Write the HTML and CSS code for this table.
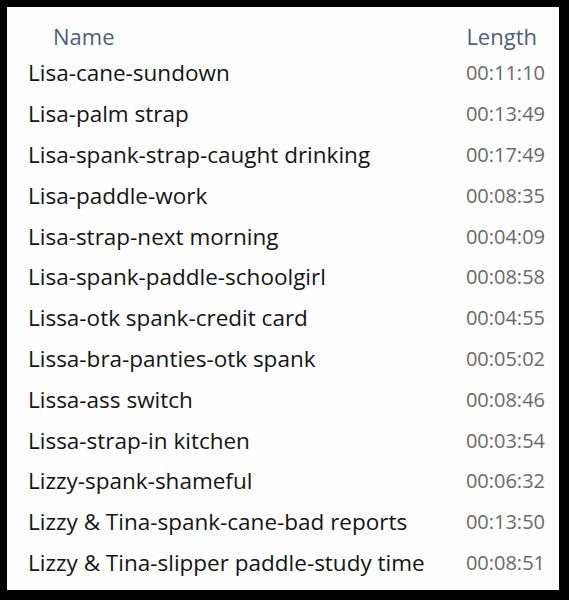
FILE: index.html
```html
<!DOCTYPE html>
<html lang="en">
<head>
    <meta charset="UTF-8">
    <title>Video list</title>
    <link rel="stylesheet" href="styles.css">
</head>
<body>
    <div class="panel">
        <div class="header">
            <span class="col-name">Name</span>
            <span class="col-length">Length</span>
        </div>
        <ul class="list">
            <li><span class="name">Lisa-cane-sundown</span><span class="time">00:11:10</span></li>
            <li><span class="name">Lisa-palm strap</span><span class="time">00:13:49</span></li>
            <li><span class="name">Lisa-spank-strap-caught drinking</span><span class="time">00:17:49</span></li>
            <li><span class="name">Lisa-paddle-work</span><span class="time">00:08:35</span></li>
            <li><span class="name">Lisa-strap-next morning</span><span class="time">00:04:09</span></li>
            <li><span class="name">Lisa-spank-paddle-schoolgirl</span><span class="time">00:08:58</span></li>
            <li><span class="name">Lissa-otk spank-credit card</span><span class="time">00:04:55</span></li>
            <li><span class="name">Lissa-bra-panties-otk spank</span><span class="time">00:05:02</span></li>
            <li><span class="name">Lissa-ass switch</span><span class="time">00:08:46</span></li>
            <li><span class="name">Lissa-strap-in kitchen</span><span class="time">00:03:54</span></li>
            <li><span class="name">Lizzy-spank-shameful</span><span class="time">00:06:32</span></li>
            <li><span class="name">Lizzy &amp; Tina-spank-cane-bad reports</span><span class="time">00:13:50</span></li>
            <li><span class="name">Lizzy &amp; Tina-slipper paddle-study time</span><span class="time">00:08:51</span></li>
        </ul>
    </div>
</body>
</html>
```

FILE: styles.css
```css
/* Basic reset */
* {
    margin: 0;
    padding: 0;
    box-sizing: border-box;
}

body {
    background-color: #000;
    font-family: "Open Sans", "Noto Sans", sans-serif;
    width: 569px;
    height: 600px;
    padding: 7px 10px 10px 7px;
}

/* White list panel */
.panel {
    background-color: #fdfdfd;
    height: 583px;
}

/* Column headers */
.header {
    display: flex;
    justify-content: space-between;
    align-items: center;
    padding: 16px 22px 4px 46px;
    height: 45.6px;
    font-size: 22px;
    line-height: 26px;
    color: #4d6079;
}

/* Rows */
.list {
    list-style: none;
}

.list li {
    display: flex;
    justify-content: space-between;
    align-items: center;
    height: 40.8px;
    padding: 0 14px 0 21px;
}

.name {
    color: #151515;
    font-size: 22.5px;
}

.time {
    color: #6a6a6a;
    font-size: 20px;
}
```
